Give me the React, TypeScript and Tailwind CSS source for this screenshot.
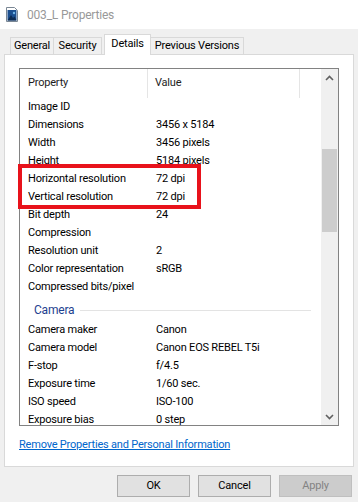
import React from "react";

type Row = { label: string; value?: string };

const imageRows: Row[] = [
  { label: "Image ID" },
  { label: "Dimensions", value: "3456 x 5184" },
  { label: "Width", value: "3456 pixels" },
  { label: "Height", value: "5184 pixels" },
  { label: "Horizontal resolution", value: "72 dpi" },
  { label: "Vertical resolution", value: "72 dpi" },
  { label: "Bit depth", value: "24" },
  { label: "Compression" },
  { label: "Resolution unit", value: "2" },
  { label: "Color representation", value: "sRGB" },
  { label: "Compressed bits/pixel" },
];

const cameraRows: Row[] = [
  { label: "Camera maker", value: "Canon" },
  { label: "Camera model", value: "Canon EOS REBEL T5i" },
  { label: "F-stop", value: "f/4.5" },
  { label: "Exposure time", value: "1/60 sec." },
  { label: "ISO speed", value: "ISO-100" },
  { label: "Exposure bias", value: "0 step" },
];

function PropRow({ row }: { row: Row }) {
  return (
    <div className="flex h-[18px] shrink-0 items-center">
      <span className="w-[128px] pl-[8px] whitespace-nowrap">{row.label}</span>
      <span className="pl-[8px] whitespace-nowrap">{row.value}</span>
    </div>
  );
}

function Tab({ label, width, active }: { label: string; width: string; active?: boolean }) {
  if (active) {
    return (
      <div
        className={`${width} relative z-10 -mb-px ml-[2px] flex h-[21px] items-center justify-center whitespace-nowrap border border-b-0 border-[#d9d9d9] bg-white pb-[2px]`}
      >
        {label}
      </div>
    );
  }
  return (
    <div
      className={`${width} flex h-[17px] items-center justify-center whitespace-nowrap border border-b-0 border-[#d9d9d9] bg-[#f0f0f0] -ml-px first:ml-0`}
    >
      {label}
    </div>
  );
}

function FileIcon() {
  return (
    <svg width="12" height="15" viewBox="0 0 12 15">
      <path d="M0.5 0.5 H8.5 L11.5 3.5 V14.5 H0.5 Z" fill="#fff" stroke="#7a8794" />
      <rect x="1.5" y="3" width="9" height="10.5" fill="#1c4f8f" />
      <path d="M1.5 13.5 L5 8 L7 11 L8.5 9.5 L10.5 13.5 Z" fill="#0d2b52" />
      <circle cx="8" cy="6" r="1.2" fill="#6fb4e8" />
    </svg>
  );
}

export default function App() {
  return (
    <div
      className="flex h-[502px] w-[358px] flex-col overflow-hidden bg-[#f0f0f0] text-[11px] tracking-[-0.2px] text-black"
      style={{ fontFamily: 'Roboto, "Liberation Sans", Arial, sans-serif' }}
    >
      {/* barra de título (ventana inactiva) */}
      <div className="flex h-[29px] shrink-0 items-center gap-[9px] bg-white pl-[6px]">
        <FileIcon />
        <span className="text-[12px] text-[#999]">003_L Properties</span>
      </div>

      <div className="flex items-end pl-[10px] pt-[5px]">
        <Tab label="General" width="w-[44px]" />
        <Tab label="Security" width="w-[49px]" />
        <Tab label="Details" width="w-[47px]" active />
        <Tab label="Previous Versions" width="w-[94px]" />
      </div>

      <div className="mx-[4px] flex h-[413px] shrink-0 flex-col border border-[#d9d9d9] bg-white px-[14px] pt-[13px]">
        <div className="relative flex h-[358px] shrink-0 border border-[#828282]">
          <div className="flex min-w-0 flex-1 flex-col overflow-hidden">
            <div className="flex h-[29px] shrink-0 items-center text-[#1e1e1e]">
              <span className="flex h-full w-[128px] items-center border-r border-[#e5e5e5] pl-[8px]">Property</span>
              <span className="flex h-full w-[152px] items-center border-r border-[#e5e5e5] pl-[7px]">Value</span>
            </div>
            {imageRows.map((r) => (
              <PropRow key={r.label} row={r} />
            ))}
            <div className="flex h-[25px] shrink-0 items-center gap-[6px] pl-[14px] pr-[10px] pt-[3px]">
              <span className="text-[12px] text-[#1e3f8f]">Camera</span>
              <span className="h-px flex-1 bg-[#e3e3e3]" />
            </div>
            {cameraRows.map((r) => (
              <PropRow key={r.label} row={r} />
            ))}
          </div>

          {/* barra de desplazamiento */}
          <div className="flex w-[17px] shrink-0 flex-col bg-[#f0f0f0]">
            <div className="flex h-[17px] items-center justify-center">
              <svg width="9" height="6" viewBox="0 0 9 6">
                <path d="M1 5 L4.5 1.5 L8 5" fill="none" stroke="#606060" strokeWidth="1.6" />
              </svg>
            </div>
            <div className="h-[63px]" />
            <div className="mx-[1px] h-[83px] bg-[#cdcdcd]" />
            <div className="flex-1" />
            <div className="flex h-[17px] items-center justify-center">
              <svg width="9" height="6" viewBox="0 0 9 6">
                <path d="M1 1 L4.5 4.5 L8 1" fill="none" stroke="#606060" strokeWidth="1.6" />
              </svg>
            </div>
          </div>

          {/* marca roja sobre las filas de resolución */}
          <div className="pointer-events-none absolute left-[-2px] top-[95px] h-[45px] w-[183px] border-4 border-[#e8121b]" />
        </div>

        <div className="pt-[11px]">
          <span className="cursor-pointer text-[#0066cc] underline">Remove Properties and Personal Information</span>
        </div>
      </div>

      <div className="flex justify-end gap-[8px] pr-[6px] pt-[8px]">
        <button className="h-[22px] w-[73px] border border-[#adadad] bg-[#e1e1e1]">OK</button>
        <button className="h-[22px] w-[73px] border border-[#adadad] bg-[#e1e1e1]">Cancel</button>
        <button className="h-[22px] w-[73px] border border-[#bfbfbf] bg-[#cccccc] text-[#838383]">Apply</button>
      </div>
    </div>
  );
}
